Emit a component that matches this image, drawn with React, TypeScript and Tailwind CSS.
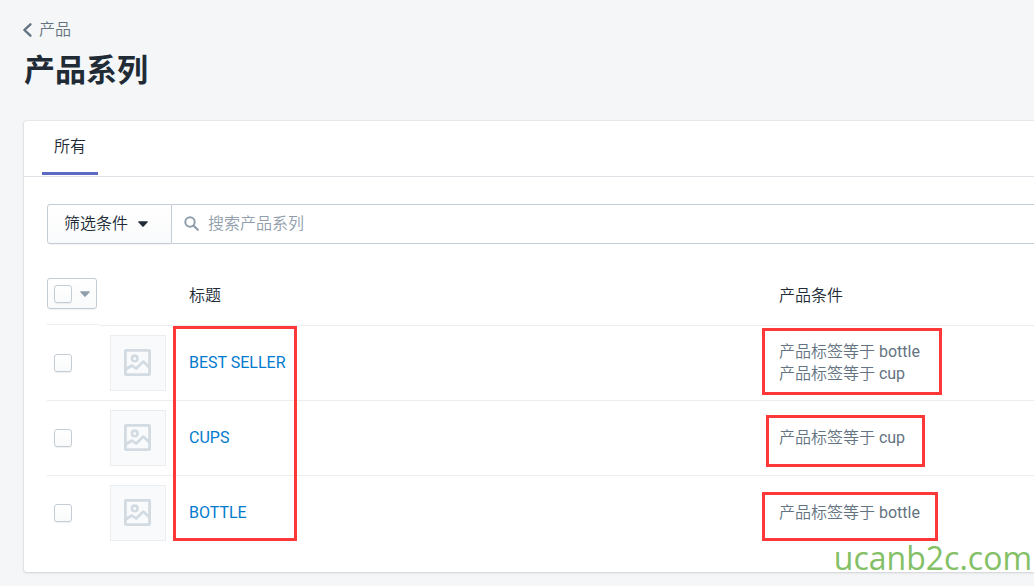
const collections = [
  {
    title: 'BEST SELLER',
    tags: ['bottle', 'cup'],
    mark: '-left-[17px] top-[2px] w-[180px] h-[67px]',
  },
  {
    title: 'CUPS',
    tags: ['cup'],
    mark: '-left-[13px] top-[14px] w-[159px] h-[52px]',
  },
  {
    title: 'BOTTLE',
    tags: ['bottle'],
    mark: '-left-[17px] top-[16px] w-[176px] h-[49px]',
  },
]

function Caret({ className }: { className: string }) {
  return (
    <svg viewBox="0 0 10 6" className={`w-[10px] h-[6px] ${className}`} fill="currentColor" aria-hidden="true">
      <path d="M0.7 0.3h8.6c.5 0 .7.5.4.9L5.6 5.6a.8.8 0 0 1-1.2 0L.3 1.2C0 .8.2.3.7.3z" />
    </svg>
  )
}

function SearchIcon() {
  return (
    <svg viewBox="0 0 16 16" className="w-4 h-4 shrink-0 text-[#919eab]" fill="none" stroke="currentColor" strokeWidth="2" aria-hidden="true">
      <circle cx="6" cy="6" r="4.7" />
      <path d="M9.7 9.7l4.1 4.1" strokeLinecap="round" strokeWidth="2.2" />
    </svg>
  )
}

function ImageIcon() {
  return (
    <svg viewBox="0 0 27 27" className="w-[27px] h-[27px]" fill="none" stroke="#d3dbe2" aria-hidden="true">
      <rect x="1.4" y="1.4" width="24.2" height="24.2" rx="0.5" strokeWidth="2.8" />
      <circle cx="10.7" cy="9.4" r="2.8" strokeWidth="2.6" />
      <path d="M1.5 20.5l6.3-4 4.4 3 7-6.9 6.3 6" strokeWidth="2.7" strokeLinejoin="round" />
    </svg>
  )
}

function Checkbox({ label }: { label: string }) {
  return (
    <input
      type="checkbox"
      aria-label={label}
      className="block appearance-none w-[18px] h-[18px] shrink-0 rounded-[3px] border border-[#c4cdd5] bg-linear-to-b from-white to-[#f9fafb] shadow-[0_1px_1px_rgba(22,29,37,0.07)] checked:bg-[#5c6ac4]"
    />
  )
}

export default function App() {
  return (
    <div className="relative min-h-screen overflow-x-hidden bg-[#f4f6f8] pt-5 pb-3 pl-[23px] text-base text-[#212b36] font-[350] font-[Roboto,'Noto_Sans_CJK_SC',sans-serif]">
      <header className="pb-[30px]">
        <a href="#products" className="flex items-center gap-[7px] h-5 leading-5 text-[#637381]">
          <svg viewBox="0 0 9 14" className="w-[9px] h-[14px]" fill="none" stroke="currentColor" strokeWidth="2.4" strokeLinecap="round" strokeLinejoin="round" aria-hidden="true">
            <path d="M7.4 1.3L1.4 7l6 5.7" />
          </svg>
          产品
        </a>
        <h1 className="mt-[11px] pl-px text-[31px] leading-10 font-bold">产品系列</h1>
      </header>

      <main className="ml-px rounded-l-[3px] bg-white shadow-[0_0_0_1px_rgba(63,63,68,0.05),0_1px_3px_0_rgba(63,63,68,0.15)] pb-[22px]">
        <nav className="flex h-14 border-b border-[#dfe3e8] pl-[18px] pb-px">
          <a href="#all" className="flex items-center px-3 border-b-3 border-[#5c6ac4]">
            所有
          </a>
        </nav>

        <div className="pt-[27px] pl-[23px]">
          <div className="flex h-10">
            <button type="button" className="flex items-center gap-[10px] w-[125px] shrink-0 pl-4 rounded-l-[3px] border border-[#c4cdd5] bg-linear-to-b from-white to-[#f9fafb] shadow-[0_1px_0_rgba(22,29,37,0.05)]">
              筛选条件
              <Caret className="text-[#212b36]" />
            </button>
            <label className="flex flex-1 items-center gap-2 pl-3 border-y border-[#c4cdd5] bg-white">
              <SearchIcon />
              <input
                type="text"
                aria-label="搜索产品系列"
                placeholder="搜索产品系列"
                className="flex-1 min-w-0 outline-none placeholder:text-[#919eab]"
              />
            </label>
          </div>

          <table className="table-fixed w-full border-separate border-spacing-0 text-left">
            <thead>
              <tr className="h-[81px]">
                <th className="w-[52px] p-0 pt-[19px] border-b border-[#ebeef0]">
                  <div className="flex items-center gap-2 w-[50px] h-[31px] pl-[6px] rounded-[3px] border border-[#c4cdd5] bg-linear-to-b from-white to-[#f9fafb] shadow-[0_1px_0_rgba(22,29,37,0.05)]">
                    <Checkbox label="全选" />
                    <button type="button" aria-label="批量操作">
                      <Caret className="text-[#919eab]" />
                    </button>
                  </div>
                </th>
                <th className="w-[90px] p-0" aria-label="图片" />
                <th className="p-0 pt-[22px] font-[350]">标题</th>
                <th className="w-[255px] p-0 pt-[22px] font-[350]">产品条件</th>
              </tr>
            </thead>
            <tbody>
              {collections.map((item, index) => (
                <tr key={item.title} className="h-[75px]">
                  <td className={`p-0 pl-[7px] border-[#ebeef0] ${index > 0 ? 'border-t' : ''}`}>
                    <Checkbox label={item.title} />
                  </td>
                  <td className="p-0 pl-[11px] border-t border-[#ebeef0]">
                    <div className="w-14 h-14 p-[13px] border border-[#ebeef0] bg-[#f9fafc]">
                      <ImageIcon />
                    </div>
                  </td>
                  <td className="relative p-0 border-t border-[#ebeef0]">
                    <a href={`#${item.title}`} className="font-normal text-[#007ace]">{item.title}</a>
                    {index === 0 && (
                      <span className="pointer-events-none absolute z-10 -left-4 top-0 w-[124px] h-[215px] border-3 border-[#fd3838]" />
                    )}
                  </td>
                  <td className="relative p-0 border-t border-[#ebeef0] text-[#637381] leading-[22px]">
                    {item.tags.map((tag) => (
                      <div key={tag}>
                        产品标签等于 <span className="font-normal">{tag}</span>
                      </div>
                    ))}
                    <span className={`pointer-events-none absolute border-3 border-[#fd3838] ${item.mark}`} />
                  </td>
                </tr>
              ))}
            </tbody>
          </table>
        </div>
      </main>

      <span className="absolute right-[2px] bottom-2 text-[32px] leading-10 font-medium text-[#83c066] font-['Open_Sans',sans-serif]">
        ucanb2c.com
      </span>
    </div>
  )
}
